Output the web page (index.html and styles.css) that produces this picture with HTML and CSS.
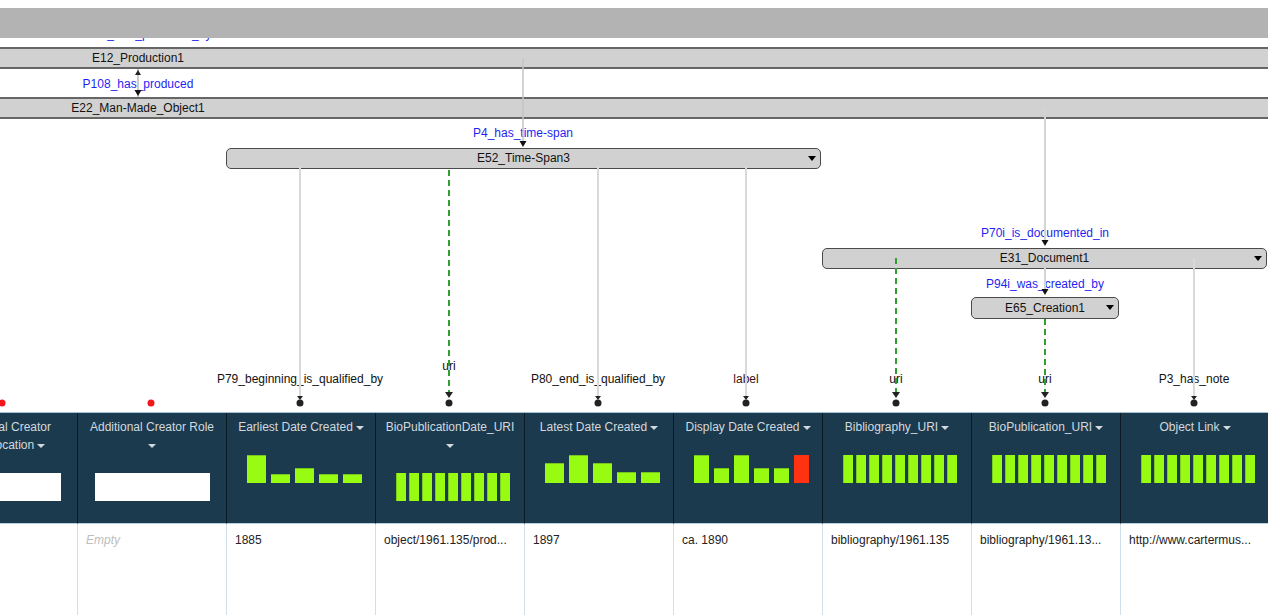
FILE: index.html
```html
<!DOCTYPE html>
<html>
<head>
<meta charset="utf-8">
<title>Model</title>
<link rel="stylesheet" href="styles.css">
</head>
<body>
<div class="graph">
  <div class="topbar"></div>
  <div class="lbl blue l-hidden">P108i_was_produced_by</div>

  <div class="band band-e12">E12_Production1</div>
  <div class="band band-e22">E22_Man-Made_Object1</div>

  <div class="lbl blue l-p108">P108_has_produced</div>
  <div class="lbl blue l-p4">P4_has_time-span</div>
  <div class="node n-e52">E52_Time-Span3</div>
  <div class="lbl blue l-p70">P70i_is_documented_in</div>
  <div class="node n-e31">E31_Document1</div>
  <div class="lbl blue l-p94">P94i_was_created_by</div>
  <div class="node n-e65">E65_Creation1</div>

  <div class="lbl l-p79">P79_beginning_is_qualified_by</div>
  <div class="lbl l-uri1">uri</div>
  <div class="lbl l-p80">P80_end_is_qualified_by</div>
  <div class="lbl l-label">label</div>
  <div class="lbl l-uri2">uri</div>
  <div class="lbl l-uri3">uri</div>
  <div class="lbl l-p3">P3_has_note</div>

  <svg class="wires" width="1268" height="412" viewBox="0 0 1268 412">
    <line x1="138" y1="69" x2="138" y2="97" stroke="#999" stroke-width="1"/>
    <polygon points="135,75 138,70 141,75" fill="#222"/>
    <polygon points="134.5,90 141.5,90 138,96" fill="#111"/>

    <line x1="523" y1="58" x2="523" y2="141" stroke="#c4c4c4" stroke-width="1.5"/>
    <polygon points="519.5,141 526.5,141 523,147" fill="#111"/>

    <line x1="1045" y1="108" x2="1045" y2="241" stroke="#d4d4d4" stroke-width="2"/>
    <polygon points="1041.5,240 1048.5,240 1045,246" fill="#111"/>
    <line x1="1045" y1="268" x2="1045" y2="290" stroke="#d4d4d4" stroke-width="2"/>
    <polygon points="1041.5,289 1048.5,289 1045,295" fill="#111"/>

    <line x1="300" y1="166" x2="300" y2="396" stroke="#d9d9d9" stroke-width="2"/>
    <line x1="598" y1="166" x2="598" y2="396" stroke="#d9d9d9" stroke-width="2"/>
    <line x1="746" y1="166" x2="746" y2="396" stroke="#d9d9d9" stroke-width="2"/>
    <line x1="1194" y1="258" x2="1194" y2="396" stroke="#d9d9d9" stroke-width="2"/>

    <line x1="449" y1="170" x2="449" y2="393" stroke="#2ea02e" stroke-width="2" stroke-dasharray="6 4"/>
    <line x1="896" y1="258" x2="896" y2="393" stroke="#2ea02e" stroke-width="2" stroke-dasharray="6 4"/>
    <line x1="1045" y1="319" x2="1045" y2="393" stroke="#2ea02e" stroke-width="2" stroke-dasharray="6 4"/>

    <g fill="#222">
      <polygon points="297,396 303,396 300,400"/><circle cx="300" cy="403" r="3.5"/>
      <polygon points="595,396 601,396 598,400"/><circle cx="598" cy="403" r="3.5"/>
      <polygon points="743,396 749,396 746,400"/><circle cx="746" cy="403" r="3.5"/>
      <polygon points="1191,396 1197,396 1194,400"/><circle cx="1194" cy="403" r="3.5"/>
      <polygon points="445,392 453,392 449,398"/><circle cx="449" cy="403" r="3.5"/>
      <polygon points="892,392 900,392 896,398"/><circle cx="896" cy="403" r="3.5"/>
      <polygon points="1041,392 1049,392 1045,398"/><circle cx="1045" cy="403" r="3.5"/>
    </g>
    <circle cx="2" cy="403" r="3.5" fill="#f4161b"/>
    <circle cx="151" cy="403" r="3.5" fill="#f4161b"/>
  </svg>
</div>

<div class="grid">
  <div class="track">
    <div class="col">
      <div class="th"><div class="title">Additional Creator<br>Birth Location<span class="caret"></span></div><div class="inp"></div></div>
      <div class="td"></div>
    </div>
    <div class="col">
      <div class="th"><div class="title">Additional Creator Role<br><span class="caret solo"></span></div><div class="inp"></div></div>
      <div class="td"><span class="empty">Empty</span></div>
    </div>
    <div class="col">
      <div class="th"><div class="title">Earliest Date Created<span class="caret"></span></div>
        <div class="hist h5"><i style="height:28px"></i><i style="height:9px"></i><i style="height:15px"></i><i style="height:9px"></i><i style="height:9px"></i></div></div>
      <div class="td">1885</div>
    </div>
    <div class="col">
      <div class="th"><div class="title">BioPublicationDate_URI<br><span class="caret solo"></span></div>
        <div class="hist h9"><i></i><i></i><i></i><i></i><i></i><i></i><i></i><i></i><i></i></div></div>
      <div class="td">object/1961.135/prod...</div>
    </div>
    <div class="col">
      <div class="th"><div class="title">Latest Date Created<span class="caret"></span></div>
        <div class="hist h5"><i style="height:20px"></i><i style="height:28px"></i><i style="height:20px"></i><i style="height:11px"></i><i style="height:11px"></i></div></div>
      <div class="td">1897</div>
    </div>
    <div class="col">
      <div class="th"><div class="title">Display Date Created<span class="caret"></span></div>
        <div class="hist h6"><i style="height:28px"></i><i style="height:15px"></i><i style="height:28px"></i><i style="height:15px"></i><i style="height:15px"></i><i class="red" style="height:28px"></i></div></div>
      <div class="td">ca. 1890</div>
    </div>
    <div class="col">
      <div class="th"><div class="title">Bibliography_URI<span class="caret"></span></div>
        <div class="hist h9"><i></i><i></i><i></i><i></i><i></i><i></i><i></i><i></i><i></i></div></div>
      <div class="td">bibliography/1961.135</div>
    </div>
    <div class="col">
      <div class="th"><div class="title">BioPublication_URI<span class="caret"></span></div>
        <div class="hist h9"><i></i><i></i><i></i><i></i><i></i><i></i><i></i><i></i><i></i></div></div>
      <div class="td">bibliography/1961.13...</div>
    </div>
    <div class="col">
      <div class="th"><div class="title">Object Link<span class="caret"></span></div>
        <div class="hist h9"><i></i><i></i><i></i><i></i><i></i><i></i><i></i><i></i><i></i></div></div>
      <div class="td">http://www.cartermus...</div>
    </div>
  </div>
</div>
</body>
</html>
```

FILE: styles.css
```css
html, body {
  margin: 0;
  padding: 0;
  background: #ffffff;
  font-family: "Liberation Sans", Arial, Helvetica, sans-serif;
  font-size: 12px;
  color: #111;
  overflow: hidden;
}

.graph {
  position: relative;
  height: 412px;
  width: 1268px;
  overflow: hidden;
}

.topbar {
  position: relative;
  z-index: 3;
  margin-top: 8px;
  height: 30px;
  background: #b3b3b3;
}

.lbl {
  position: absolute;
  z-index: 1;
  transform: translateX(-50%);
  white-space: nowrap;
  font-size: 12px;
  line-height: 14px;
  color: #111;
}
.blue { color: #1f1ff2; }

.l-hidden { left: 144px; top: 27px; }
.l-p108 { left: 138px; top: 77px; }
.l-p4 { left: 523px; top: 126px; }
.l-p70 { left: 1045px; top: 226px; }
.l-p94 { left: 1045px; top: 277px; }
.l-p79 { left: 300px; top: 372px; }
.l-uri1 { left: 449px; top: 359px; }
.l-p80 { left: 598px; top: 372px; }
.l-label { left: 746px; top: 372px; color: #3d0f0f; }
.l-uri2 { left: 896px; top: 372px; }
.l-uri3 { left: 1045px; top: 372px; }
.l-p3 { left: 1194px; top: 372px; }

.band {
  position: absolute;
  left: -994px;
  width: 2264px;
  height: 18px;
  line-height: 18px;
  border-top: 2px solid #666;
  border-bottom: 2px solid #666;
  background: #d1d1d1;
  text-align: center;
  color: #111;
}
.band-e12 { top: 47px; }
.band-e22 { top: 97px; }

.node {
  position: absolute;
  box-sizing: border-box;
  height: 21px;
  line-height: 19px;
  border: 1px solid #4a4a4a;
  border-radius: 5px;
  background: #d1d1d1;
  text-align: center;
  color: #111;
}
.node::after {
  content: "";
  position: absolute;
  right: 4px;
  top: 7px;
  border-top: 5px solid #000;
  border-left: 4px solid transparent;
  border-right: 4px solid transparent;
}
.n-e52 { left: 226px; top: 148px; width: 595px; }
.n-e31 { left: 822px; top: 248px; width: 445px; }
.n-e65 { left: 971px; top: 297px; width: 148px; height: 22px; line-height: 20px; }

.wires {
  position: absolute;
  left: 0;
  top: 0;
  z-index: 2;
}

.grid {
  overflow: hidden;
  border-top: 1px solid #a3c2d5;
  width: 1268px;
  height: 202px;
}
.track {
  display: flex;
  margin-left: -72px;
}
.col {
  flex: 0 0 149px;
  width: 149px;
  display: flex;
  flex-direction: column;
}
.th {
  box-sizing: border-box;
  height: 111px;
  padding: 5px 8px 0;
  background: #1c3a4e;
  border-left: 1px solid #0c1a23;
  border-bottom: 1px solid #b9d0de;
  text-align: center;
  color: #d2d9de;
}
.title {
  line-height: 18px;
  white-space: nowrap;
}
.caret {
  display: inline-block;
  vertical-align: middle;
  margin-left: 3px;
  border-top: 4px solid #d2d9de;
  border-left: 4px solid transparent;
  border-right: 4px solid transparent;
}
.caret.solo { margin-left: 0; }

.inp {
  width: 115px;
  height: 28px;
  margin: 19px auto 0;
  background: #ffffff;
}

.hist {
  display: flex;
  align-items: flex-end;
  justify-content: center;
  height: 28px;
  margin-top: 19px;
  padding-left: 6px;
}
.hist i {
  display: block;
  box-sizing: border-box;
  background: #97fc12;
  border-top: 1px solid #76c41d;
}
.hist i.red { background: #ff3311; border-top-color: #ff3311; }
.h5 { gap: 5px; }
.h5 i { width: 19px; }
.h6 { gap: 5px; }
.h6 i { width: 15px; }
.h9 { gap: 3px; }
.h9 i { width: 10px; height: 28px; border-left: 1px solid #7ccc1c; border-top: none; }

.td {
  box-sizing: border-box;
  height: 91px;
  padding: 9px 8px 0;
  border-left: 1px solid #cfe0ec;
  line-height: 15px;
  color: #222;
  white-space: nowrap;
  overflow: hidden;
}
.empty {
  font-style: italic;
  color: #bdbdbd;
}
```
